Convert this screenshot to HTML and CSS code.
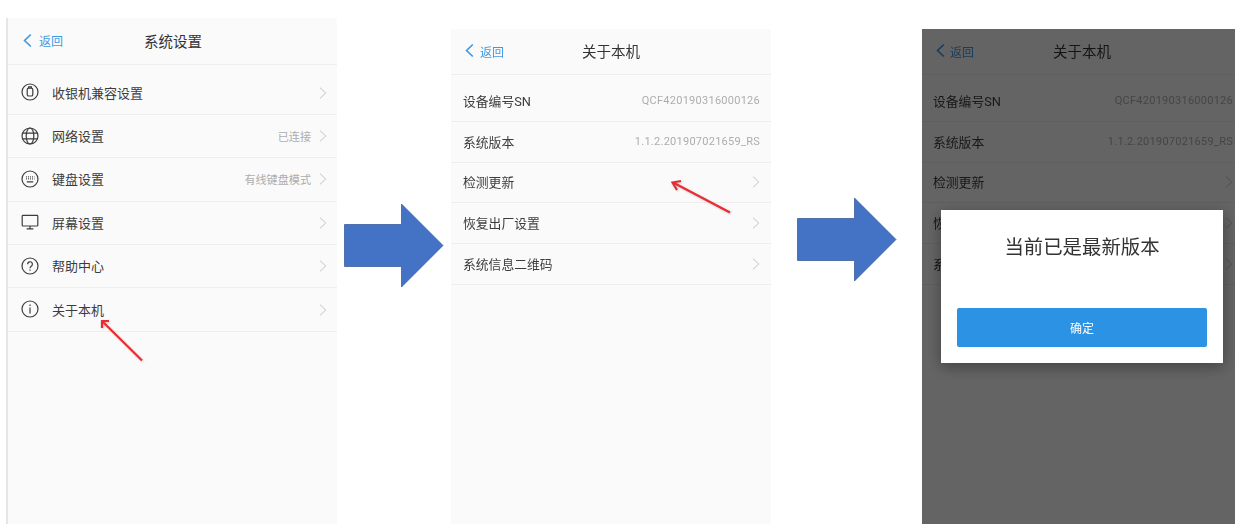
FILE: index.html
```html
<!DOCTYPE html>
<html lang="zh-CN">
<head>
<meta charset="utf-8">
<title>系统设置</title>
<link rel="stylesheet" href="styles.css">
</head>
<body>
<svg class="defs" width="0" height="0" aria-hidden="true">
  <symbol id="chev" viewBox="0 0 8 12"><path d="M1 .7 6.800 6 1 11.300" fill="none" stroke="currentColor" stroke-width="1"/></symbol>
  <symbol id="back" viewBox="0 0 9 14"><path d="M7.800 1 1.600 7l6.200 6" fill="none" stroke="currentColor" stroke-width="1.700"/></symbol>
</svg>
<main class="stage">

  <section class="phone phone-a">
    <header class="bar bar-a">
      <span class="back"><svg class="back-icon"><use href="#back"/></svg>返回</span>
      <h1 class="title">系统设置</h1>
    </header>
    <ul class="list list-a">
      <li class="row">
        <svg class="ico" viewBox="0 0 18 18"><circle cx="9" cy="9" r="8"/><rect x="6.200" y="5.200" width="5.600" height="7.800" rx="1.600"/><path d="M7.600 5.200V3.800h2.800v1.400"/></svg>
        <span class="label">收银机兼容设置</span><svg class="chev"><use href="#chev"/></svg>
      </li>
      <li class="row">
        <svg class="ico" viewBox="0 0 18 18"><circle cx="9" cy="9" r="8"/><ellipse cx="9" cy="9" rx="3.800" ry="8"/><path d="M1.600 6.200h14.800M1.600 11.800h14.800"/></svg>
        <span class="label">网络设置</span><span class="value">已连接</span><svg class="chev"><use href="#chev"/></svg>
      </li>
      <li class="row">
        <svg class="ico" viewBox="0 0 18 18"><circle cx="9" cy="9" r="8"/><path d="M5 6.800h.9M7 6.800h.9M9 6.800h.9M11 6.800h.9M13 6.800h.4M5 8.800h.9M7 8.800h.9M9 8.800h.9M11 8.800h.9M13 8.800h.4M5.800 11.800h6.400"/></svg>
        <span class="label">键盘设置</span><span class="value">有线键盘模式</span><svg class="chev"><use href="#chev"/></svg>
      </li>
      <li class="row">
        <svg class="ico" viewBox="0 0 18 18"><rect x="1.200" y="2.400" width="15.600" height="10.600" rx=".8"/><path d="M9 13v2.600M5.600 15.800h6.800"/></svg>
        <span class="label">屏幕设置</span><svg class="chev"><use href="#chev"/></svg>
      </li>
      <li class="row">
        <svg class="ico" viewBox="0 0 18 18"><circle cx="9" cy="9" r="8"/><path d="M6.600 7.200a2.400 2.400 0 1 1 3.700 2c-.9.600-1.300 1-1.300 2.100M9 12.600v1.200"/></svg>
        <span class="label">帮助中心</span><svg class="chev"><use href="#chev"/></svg>
      </li>
      <li class="row">
        <svg class="ico" viewBox="0 0 18 18"><circle cx="9" cy="9" r="8"/><path d="M9 4.600v1.400M9 7.600v6"/></svg>
        <span class="label">关于本机</span><svg class="chev"><use href="#chev"/></svg>
      </li>
    </ul>
    <svg class="pointer pointer-a" viewBox="0 0 46 46"><path d="M44 43.500 5 5" /><path d="M4 11V4h7" /></svg>
  </section>

  <svg class="big-arrow big-arrow-a" viewBox="0 0 100 85"><path d="M.5 21.500H57.500V1L99 42.500 57.500 84V63.500H.5Z"/></svg>

  <section class="phone phone-b">
    <header class="bar bar-b">
      <span class="back"><svg class="back-icon"><use href="#back"/></svg>返回</span>
      <h1 class="title">关于本机</h1>
    </header>
    <ul class="list list-b">
      <li class="row"><span class="label">设备编号SN</span><span class="value num">QCF420190316000126</span></li>
      <li class="row"><span class="label">系统版本</span><span class="value num">1.1.2.201907021659_RS</span></li>
      <li class="row"><span class="label">检测更新</span><svg class="chev"><use href="#chev"/></svg></li>
      <li class="row"><span class="label">恢复出厂设置</span><svg class="chev"><use href="#chev"/></svg></li>
      <li class="row"><span class="label">系统信息二维码</span><svg class="chev"><use href="#chev"/></svg></li>
    </ul>
    <svg class="pointer pointer-b" viewBox="0 0 62 36"><path d="M60 33.500 4 4"/><path d="M7 11 2.500 3.500 11 2"/></svg>
  </section>

  <svg class="big-arrow big-arrow-b" viewBox="0 0 100 85"><path d="M.5 21.500H57.500V1L99 42.500 57.500 84V63.500H.5Z"/></svg>

  <section class="phone phone-c">
    <header class="bar bar-b">
      <span class="back"><svg class="back-icon"><use href="#back"/></svg>返回</span>
      <h1 class="title">关于本机</h1>
    </header>
    <ul class="list list-b">
      <li class="row"><span class="label">设备编号SN</span><span class="value num">QCF420190316000126</span></li>
      <li class="row"><span class="label">系统版本</span><span class="value num">1.1.2.201907021659_RS</span></li>
      <li class="row"><span class="label">检测更新</span><svg class="chev"><use href="#chev"/></svg></li>
      <li class="row"><span class="label">恢复出厂设置</span><svg class="chev"><use href="#chev"/></svg></li>
      <li class="row"><span class="label">系统信息二维码</span><svg class="chev"><use href="#chev"/></svg></li>
    </ul>
    <div class="scrim"></div>
    <div class="modal">
      <p class="modal-text">当前已是最新版本</p>
      <button class="modal-btn" type="button">确定</button>
    </div>
  </section>

</main>
</body>
</html>
```
FILE: styles.css
```css
* { box-sizing: border-box; }
html, body { margin: 0; padding: 0; background: #fff; }
body {
  font-family: Roboto, "Noto Sans CJK SC", sans-serif;
  color: #333;
  overflow: hidden;
}
.defs { position: absolute; }
.stage {
  display: flex;
  align-items: flex-start;
  height: 524px;
  padding-left: 6px;
  overflow: hidden;
  filter: blur(.45px);
}
.phone {
  position: relative;
  flex: none;
  height: 524px;
  background: #fafafa;
  overflow: hidden;
}
.phone-a { width: 331px; margin-top: 18px; border-left: 2px solid #e6e6e6; }
.phone-b { width: 320px; margin-top: 29px; margin-left: 7px; }
.phone-c { width: 313px; margin-top: 29px; margin-left: 25px; }

.bar {
  position: relative;
  display: flex;
  align-items: center;
  justify-content: center;
  padding-bottom: 2px;
  border-bottom: 1px solid #eeeeee;
}
.bar-a { height: 47px; }
.bar-b { height: 46px; }
.phone-c .bar { margin-right: -7px; }
.title { margin: 0; font-size: 14.500px; font-weight: 400; color: #333; }
.bar-a .title { margin-left: 1px; }
.back {
  position: absolute;
  left: 14px;
  top: 48%;
  transform: translateY(-50%);
  display: flex;
  align-items: center;
  gap: 6px;
  font-size: 12px;
  color: #3f9ae5;
}
.bar-a .back { left: 15px; gap: 7px; }
.phone-c .back { gap: 5px; }
.back-icon { width: 9px; height: 14px; color: #3f9ae5; }

.list { list-style: none; margin: 0; padding: 0; }
.list-a { padding-top: 6.500px; }
.list-b { padding-top: 6px; }
.row {
  display: flex;
  align-items: center;
  border-bottom: 1px solid #eeeeee;
}
.list-a .row { height: 43.400px; padding: 0 10px 1px 13px; }
.list-b .row { height: 40.800px; padding: 0 11px 1px 12px; }
.list-b .label { font-size: 12.800px; }
.phone-c .list-b .row { padding-left: 11px; padding-right: 2px; }
.ico {
  flex: none;
  width: 18px;
  height: 18px;
  margin-right: 13px;
  fill: none;
  stroke: #3c3c3c;
  stroke-width: 1.200;
}
.label { font-size: 13px; color: #3c3c3c; letter-spacing: 0; }
.value { margin-left: auto; font-size: 11.100px; color: #adadad; }
.num { font-size: 11px; letter-spacing: .26px; }
.chev {
  flex: none;
  width: 8px;
  height: 12px;
  margin-top: 1px;
  margin-left: auto;
  color: #c4c4c4;
}
.value + .chev { margin-left: 8px; }

.pointer {
  position: absolute;
  fill: none;
  stroke: #ea2b33;
  stroke-width: 2.200;
  filter: drop-shadow(1px 1px 1px rgba(0, 0, 0, .2));
}
.pointer-a { left: 90px; top: 299px; width: 46px; height: 46px; }
.pointer-b { left: 219px; top: 150px; width: 62px; height: 36px; }

.big-arrow {
  flex: none;
  width: 100px;
  height: 85px;
  fill: #4472c4;
  stroke: #2f5597;
  stroke-width: .7;
}
.big-arrow-a { margin-top: 203px; margin-left: 7px; }
.big-arrow-b { margin-top: 197px; margin-left: 26px; }

.scrim { position: absolute; inset: 0; background: rgba(0, 0, 0, .6); }
.modal {
  position: absolute;
  left: 19px;
  top: 181px;
  width: 282px;
  height: 153px;
  display: flex;
  flex-direction: column;
  align-items: center;
  background: #fff;
  box-shadow: 0 4px 14px rgba(0, 0, 0, .35);
}
.modal-text {
  margin: 24px 0 0;
  font-size: 19.400px;
  line-height: 28px;
  color: #333;
}
.modal-btn {
  width: 250px;
  height: 39px;
  margin-top: auto;
  margin-bottom: 16px;
  border: 0;
  border-radius: 2px;
  background: #2b92e4;
  color: #fff;
  font: inherit;
  font-size: 12px;
}
```
